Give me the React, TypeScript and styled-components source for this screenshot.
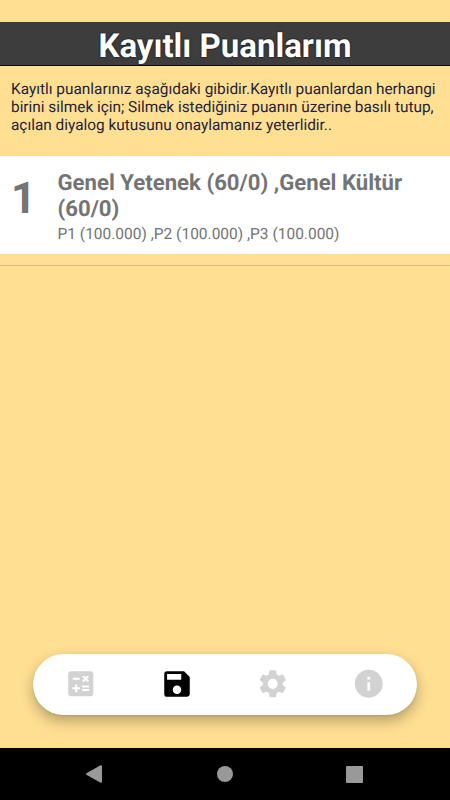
import React from "react";
import styled, { createGlobalStyle } from "styled-components";
import { MdCalculate, MdSave, MdSettings, MdInfo } from "react-icons/md";

const GlobalStyle = createGlobalStyle`
  * { box-sizing: border-box; }
  body { margin: 0; font-family: Roboto, sans-serif; text-rendering: geometricPrecision; }
`;

const Screen = styled.div`
  width: 450px;
  height: 800px;
  overflow: hidden;
  display: flex;
  flex-direction: column;
  background: #ffdf92;
`;

const Title = styled.h1`
  margin: 22px 0 0;
  height: 44px;
  flex: none;
  background: #3d3d3d;
  border-bottom: 1px solid #0c0810;
  color: #fff;
  font-size: 33px;
  font-weight: 700;
  line-height: 49px;
  text-align: center;
  text-shadow: 0 0 2px #000;
`;

const Intro = styled.p`
  margin: 14px 0 0;
  padding-left: 11px;
  font-size: 15.39px;
  line-height: 18px;
  color: #24233a;
  white-space: nowrap;
`;

const Scores = styled.main`
  flex: 1;
  margin-top: 22px;
`;

const Score = styled.article`
  display: flex;
  height: 98px;
  background: #fff;
  color: #747474;
`;

const Rank = styled.div`
  width: 57.5px;
  padding: 16px 0 0 11px;
  font-size: 43.75px;
  font-weight: 700;
  line-height: 52px;
`;

const ScoreName = styled.h2`
  margin: 14px 0 0;
  font-size: 22.15px;
  font-weight: 700;
  line-height: 26px;
`;

const Points = styled.div`
  font-size: 15.5px;
  line-height: 24px;
`;

const Divider = styled.hr`
  margin: 11px 0 0;
  border: 0;
  height: 1px;
  background: #d6bb7b;
`;

const TabBar = styled.nav`
  flex: none;
  display: grid;
  grid-template-columns: repeat(4, 1fr);
  width: 384px;
  height: 61.5px;
  margin: 0 0 33px 33px;
  padding-bottom: 1px;
  border-radius: 31px;
  background: #fff;
  box-shadow: 0 6px 14px rgba(0, 0, 0, 0.29), 0 1px 2px rgba(0, 0, 0, 0.08);
`;

const Tab = styled.button<{ $active?: boolean }>`
  display: flex;
  align-items: center;
  justify-content: center;
  padding: 0;
  border: 0;
  background: none;
  color: ${(p) => (p.$active ? "#000" : "#d2d2d2")};
  svg { display: block; }
`;

const SystemBar = styled.footer`
  flex: none;
  height: 52px;
  display: flex;
  justify-content: space-between;
  align-items: center;
  padding: 0 87px 0 86px;
  background: #000;
  svg { display: block; }
  svg:nth-child(2) { margin-left: 2px; }
`;

const tabs = [
  { label: "Hesapla", Icon: MdCalculate },
  { label: "Kayıtlı", Icon: MdSave, active: true },
  { label: "Ayarlar", Icon: MdSettings },
  { label: "Bilgi", Icon: MdInfo },
];

export default function App() {
  return (
    <Screen>
      <GlobalStyle />
      <Title>Kayıtlı Puanlarım</Title>
      <Intro>
        Kayıtlı puanlarınız aşağıdaki gibidir.Kayıtlı puanlardan herhangi
        <br />
        birini silmek için; Silmek istediğiniz puanın üzerine basılı tutup,
        <br />
        açılan diyalog kutusunu onaylamanız yeterlidir..
      </Intro>
      <Scores>
        <Score>
          <Rank>1</Rank>
          <div>
            <ScoreName>
              Genel Yetenek (60/0) ,Genel Kültür
              <br />
              (60/0)
            </ScoreName>
            <Points>P1 (100.000) ,P2 (100.000) ,P3 (100.000)</Points>
          </div>
        </Score>
        <Divider />
      </Scores>
      <TabBar>
        {tabs.map(({ label, Icon, active }) => (
          <Tab key={label} aria-label={label} $active={active}>
            <Icon size={active ? 34 : 33.5} />
          </Tab>
        ))}
      </TabBar>
      <SystemBar>
        <svg width="16" height="18" viewBox="0 0 16 18" fill="#999">
          <path d="M.4 8.2 14.6.2Q16 0 16 1v16q0 1-1.4.8L.4 9.8Q-.3 9 .4 8.2z" />
        </svg>
        <svg width="16" height="16" viewBox="0 0 16 16" fill="#999">
          <circle cx="8" cy="8" r="8" />
        </svg>
        <svg width="17" height="17" viewBox="0 0 17 17" fill="#999">
          <rect width="17" height="17" rx="1" />
        </svg>
      </SystemBar>
    </Screen>
  );
}
